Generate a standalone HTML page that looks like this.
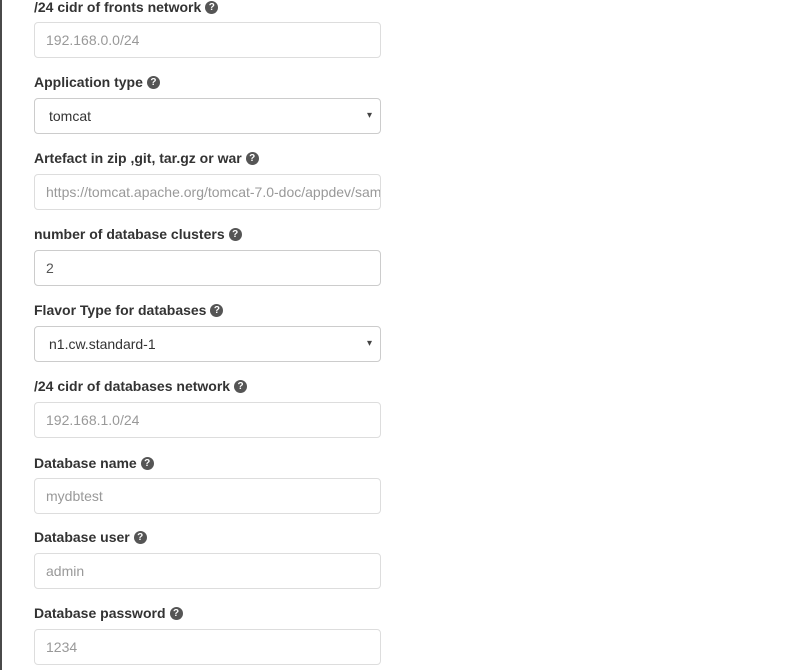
<!DOCTYPE html>
<html><head><meta charset="utf-8"><style>
html,body{margin:0;padding:0;background:#fff;width:804px;height:670px;overflow:hidden;font-family:"Liberation Sans",sans-serif;}
.strip{position:absolute;left:0;top:0;width:2px;height:670px;background:#4a4a4a;}
.lbl{position:absolute;left:34px;font-size:14px;font-weight:bold;color:#333;line-height:16px;}
.q{display:inline-block;width:13px;height:13px;border-radius:50%;background:#555;color:#fff;font-size:10px;line-height:13px;text-align:center;vertical-align:-1px;margin-left:4px;font-weight:bold;position:relative;top:-3px;}
.in{position:absolute;left:34px;height:34px;border:1px solid #ddd;border-radius:4px;box-sizing:content-box;font-size:14px;line-height:34px;padding-left:11px;width:334px;color:#999;overflow:hidden;white-space:nowrap;}
.in.v{color:#555;border-color:#ccc}
.in.sel{color:#333;padding-left:14px;width:331px;border-color:#ccc}
.arr{position:absolute;right:8px;top:0;font-size:10px;color:#444}
</style></head><body>
<div class="strip"></div>
<div class="lbl" style="top:-1px">/24 cidr of fronts network<span class="q">?</span></div>
<div class="in" style="top:22px">192.168.0.0/24</div>
<div class="lbl" style="top:74px">Application type<span class="q">?</span></div>
<div class="in sel" style="top:98px">tomcat<span class="arr">▾</span></div>
<div class="lbl" style="top:150px">Artefact in zip ,git, tar.gz or war<span class="q">?</span></div>
<div class="in" style="top:174px">https://tomcat.apache.org/tomcat-7.0-doc/appdev/sample/sample.war</div>
<div class="lbl" style="top:226px">number of database clusters<span class="q">?</span></div>
<div class="in v" style="top:250px">2</div>
<div class="lbl" style="top:302px">Flavor Type for databases<span class="q">?</span></div>
<div class="in sel" style="top:326px">n1.cw.standard-1<span class="arr">▾</span></div>
<div class="lbl" style="top:378px">/24 cidr of databases network<span class="q">?</span></div>
<div class="in" style="top:402px">192.168.1.0/24</div>
<div class="lbl" style="top:455px">Database name<span class="q">?</span></div>
<div class="in" style="top:478px">mydbtest</div>
<div class="lbl" style="top:529px">Database user<span class="q">?</span></div>
<div class="in" style="top:553px">admin</div>
<div class="lbl" style="top:605px">Database password<span class="q">?</span></div>
<div class="in" style="top:629px">1234</div>
</body></html>
